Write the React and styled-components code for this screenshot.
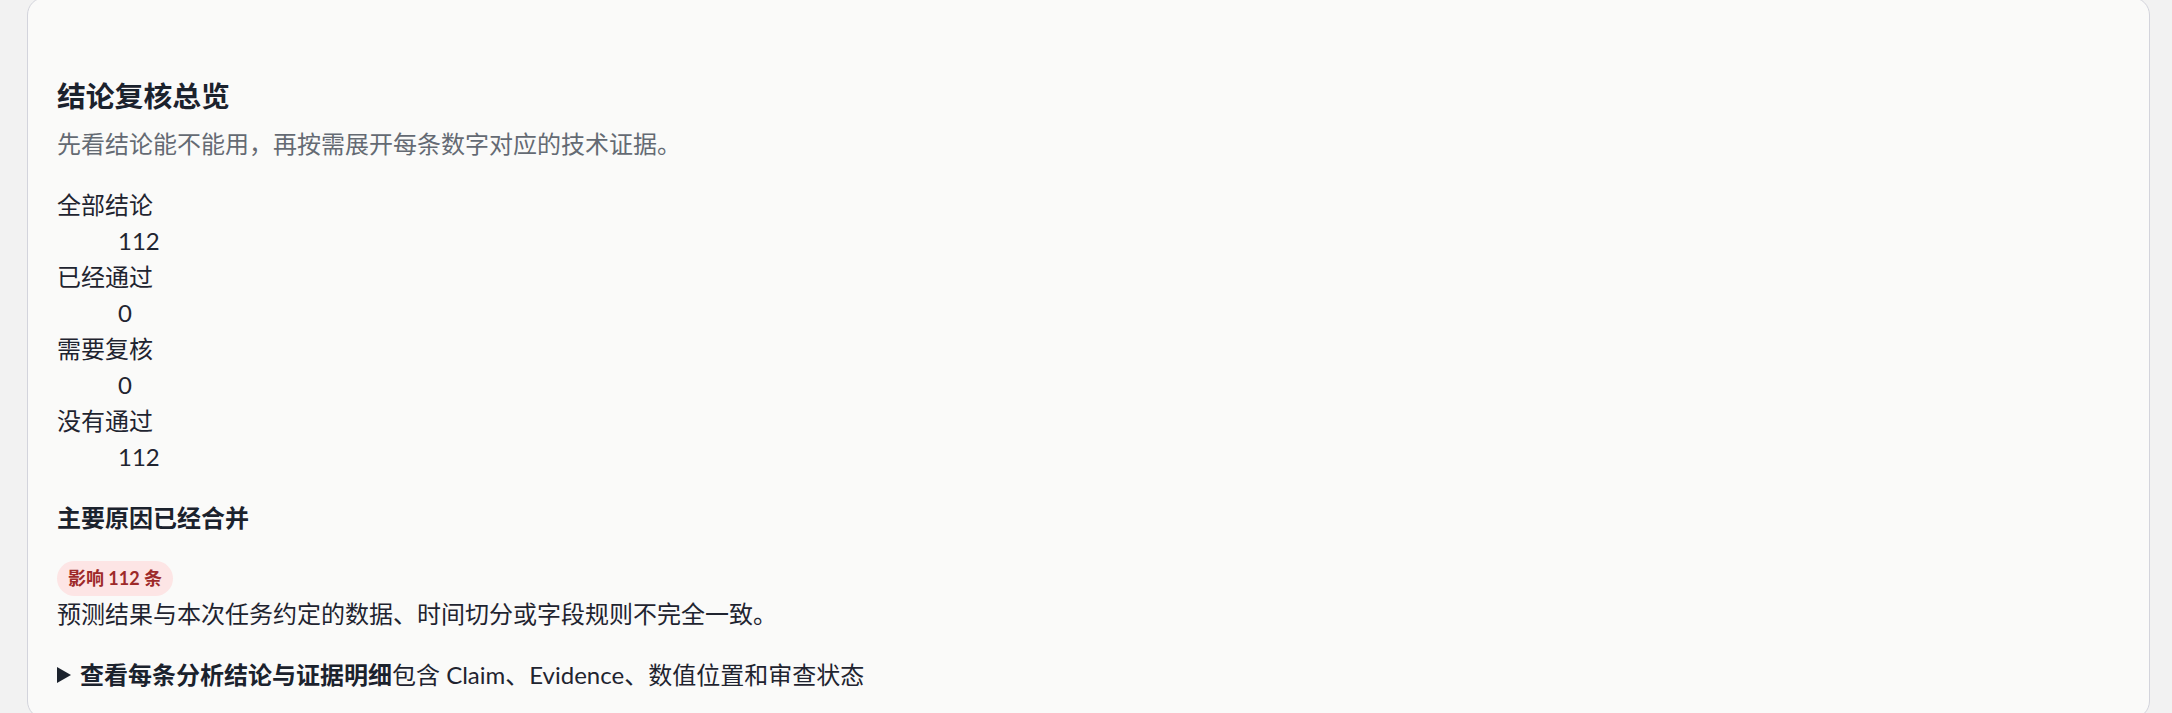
import styled, { createGlobalStyle } from "styled-components";

const GlobalStyle = createGlobalStyle`
  html, body {
    margin: 0;
    padding: 0;
    background: #f2f2f2;
  }
  body {
    font-family: Lato, "Noto Sans CJK SC", sans-serif;
    color: #1f2430;
    overflow: hidden;
  }
`;

const Page = styled.main`
  padding: 0 22px 0 27px;
`;

const Card = styled.section`
  margin-top: -3px;
  background: #fafaf9;
  border: 1px solid #d3d4dc;
  border-radius: 18px;
  padding: 77px 29px 25px;
`;

const Title = styled.h2`
  margin: 0;
  font-size: 28.8px;
  line-height: 43.2px;
  font-weight: 700;
  color: #1b222d;
`;

const Lead = styled.p`
  margin: 7.5px 0 0;
  font-size: 24px;
  line-height: 36px;
  color: #646a73;
`;

const Stats = styled.dl`
  margin: 25px 0 0;
  font-size: 24px;
  line-height: 36px;
`;

const StatLabel = styled.dt`
  margin: 0;
`;

const StatValue = styled.dd`
  margin: 0 0 0 61px;
`;

const SubTitle = styled.h3`
  margin: 25px 0 0;
  font-size: 24px;
  line-height: 36px;
  font-weight: 700;
  color: #1b222d;
`;

const BadgeRow = styled.div`
  display: flex;
  margin-top: 25px;
`;

const Badge = styled.span`
  display: block;
  padding: 4px 11px;
  border-radius: 999px;
  background: #fde5e5;
  color: #9e2a2a;
  font-size: 18px;
  line-height: 27px;
  font-weight: 700;
`;

const Reason = styled.p`
  margin: 0;
  font-size: 24px;
  line-height: 36px;
`;

const Details = styled.details`
  margin-top: 25px;
  font-size: 24px;
  line-height: 36px;
`;

const Summary = styled.summary`
  display: flex;
  align-items: center;
  list-style: none;
  cursor: pointer;

  &::-webkit-details-marker {
    display: none;
  }

  &::before {
    content: "";
    width: 0;
    height: 0;
    border-left: 14px solid #1b222d;
    border-top: 8px solid transparent;
    border-bottom: 8px solid transparent;
    margin-right: 9px;
  }

  strong {
    font-weight: 700;
    color: #1b222d;
  }
`;

const stats = [
  { label: "全部结论", value: 112 },
  { label: "已经通过", value: 0 },
  { label: "需要复核", value: 0 },
  { label: "没有通过", value: 112 },
];

export default function App() {
  return (
    <>
      <GlobalStyle />
      <Page>
        <Card>
          <Title>结论复核总览</Title>
          <Lead>先看结论能不能用，再按需展开每条数字对应的技术证据。</Lead>
          <Stats>
            {stats.map((s) => (
              <div key={s.label}>
                <StatLabel>{s.label}</StatLabel>
                <StatValue>{s.value}</StatValue>
              </div>
            ))}
          </Stats>
          <SubTitle>主要原因已经合并</SubTitle>
          <BadgeRow>
            <Badge>影响 112 条</Badge>
          </BadgeRow>
          <Reason>预测结果与本次任务约定的数据、时间切分或字段规则不完全一致。</Reason>
          <Details>
            <Summary>
              <strong>查看每条分析结论与证据明细</strong>
              <span>包含 Claim、Evidence、数值位置和审查状态</span>
            </Summary>
          </Details>
        </Card>
      </Page>
    </>
  );
}
